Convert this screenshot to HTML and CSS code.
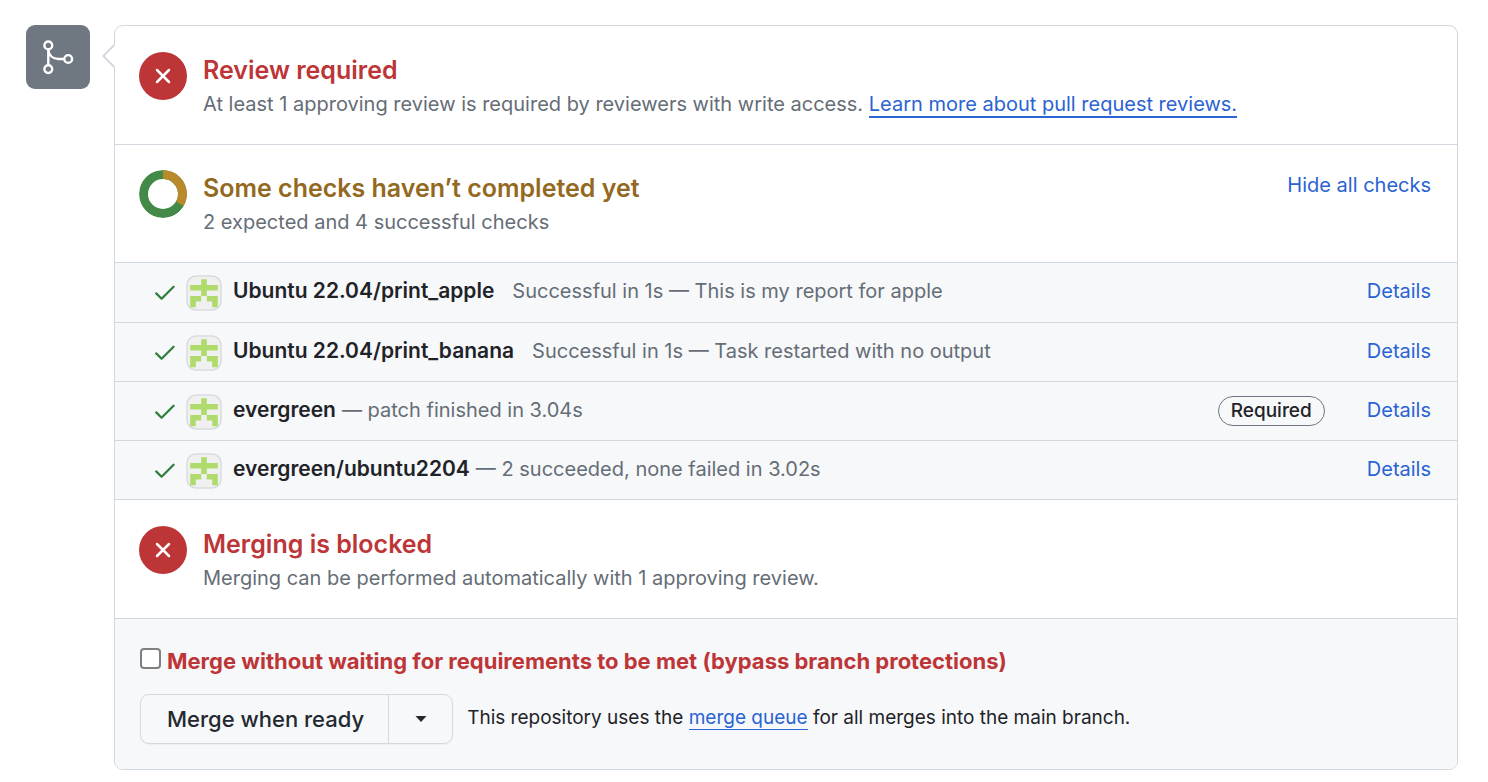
FILE: index.html
```html
<!DOCTYPE html>
<html lang="en">
<head>
<meta charset="utf-8">
<title>Merge status</title>
<link rel="stylesheet" href="styles.css">
</head>
<body>
<svg width="0" height="0" class="sprite" aria-hidden="true">
  <symbol id="cross" viewBox="0 0 48 48"><path d="M18 18l12 12M30 18l-12 12" fill="none" stroke="#fff" stroke-width="2.500" stroke-linecap="round"/></symbol>
  <symbol id="tick" viewBox="0 0 20 16"><path d="M1.200 8.400L6.600 13.700 18.600 1.700" fill="none" stroke="#2f7d3b" stroke-width="2.200" stroke-linecap="round" stroke-linejoin="round"/></symbol>
  <symbol id="avatar" viewBox="0 0 36 36">
    <rect x="1" y="1" width="34" height="34" rx="9" fill="#f0f0f0" stroke="#d9dbde" stroke-width="1.500"/>
    <path d="M15.200 4.300h5.600v5.600h11v5.600h-11v5.500h11v11.200h-5.600v-5.600h-5.400V21h-5.600v5.600H9.800v5.600H4.200V21h11v-5.500h-11V9.900h11z" fill="#aedb6c"/>
  </symbol>
</svg>
<main class="merge">
  <div class="badge">
    <svg viewBox="0 0 64 64" width="64" height="64" fill="none" stroke="#fff" stroke-width="2.400" aria-hidden="true">
      <circle cx="22.300" cy="20.400" r="3.900"/><circle cx="22.300" cy="44.100" r="3.900"/><circle cx="42.200" cy="34" r="3.900"/>
      <path d="M22.300 24.300v15.900M22.300 24.600c.6 5.700 4.500 9.400 10 9.400h6"/>
    </svg>
  </div>
  <div class="box">
    <svg class="caret" viewBox="0 0 13 24" width="13" height="24" aria-hidden="true"><path d="M13 0L1 12l12 12z" fill="#fff"/><path d="M12.500 .7L1.300 12l11.200 11.300" fill="none" stroke="#d0d7de" stroke-width="1.800"/></svg>
    <section class="status">
      <svg class="disc" aria-hidden="true"><use href="#cross"/></svg>
      <div class="body">
        <h2 class="title danger">Review required</h2>
        <p class="note">At least 1 approving review is required by reviewers with write access. <a class="underlined" href="#reviews">Learn more about pull request reviews.</a></p>
      </div>
    </section>
    <section class="status compact">
      <svg class="donut" viewBox="0 0 48 48" fill="none" stroke-width="9" aria-hidden="true">
        <circle cx="24" cy="24" r="19.500" stroke="#438a48"/>
        <path d="M24 4.500A19.500 19.500 0 0 1 40.890 33.750" stroke="#b88a2c"/>
      </svg>
      <div class="body">
        <h2 class="title attention">Some checks haven’t completed yet</h2>
        <p class="note">2 expected and 4 successful checks</p>
      </div>
      <button class="toggle" type="button">Hide all checks</button>
    </section>
    <ul class="checks">
      <li class="check"><svg class="tick" aria-hidden="true"><use href="#tick"/></svg><svg class="avatar" aria-hidden="true"><use href="#avatar"/></svg>
        <p class="text spaced"><strong>Ubuntu 22.04/print_apple</strong><span>Successful in 1s — This is my report for apple</span></p><a class="details" href="#apple">Details</a></li>
      <li class="check"><svg class="tick" aria-hidden="true"><use href="#tick"/></svg><svg class="avatar" aria-hidden="true"><use href="#avatar"/></svg>
        <p class="text spaced"><strong>Ubuntu 22.04/print_banana</strong><span>Successful in 1s — Task restarted with no output</span></p><a class="details" href="#banana">Details</a></li>
      <li class="check"><svg class="tick" aria-hidden="true"><use href="#tick"/></svg><svg class="avatar" aria-hidden="true"><use href="#avatar"/></svg>
        <p class="text"><strong>evergreen</strong><span>— patch finished in 3.04s</span></p><span class="required">Required</span><a class="details" href="#evergreen">Details</a></li>
      <li class="check"><svg class="tick" aria-hidden="true"><use href="#tick"/></svg><svg class="avatar" aria-hidden="true"><use href="#avatar"/></svg>
        <p class="text"><strong>evergreen/ubuntu2204</strong><span>— 2 succeeded, none failed in 3.02s</span></p><a class="details" href="#ubuntu2204">Details</a></li>
    </ul>
    <section class="status">
      <svg class="disc" aria-hidden="true"><use href="#cross"/></svg>
      <div class="body">
        <h2 class="title danger">Merging is blocked</h2>
        <p class="note">Merging can be performed automatically with 1 approving review.</p>
      </div>
    </section>
    <form class="actions">
      <div class="bypass">
        <input class="checkbox" type="checkbox" id="bypass">
        <label class="bypass-label" for="bypass">Merge without waiting for requirements to be met (bypass branch protections)</label>
      </div>
      <div class="merge-row">
        <div class="group">
          <button class="btn" type="button">Merge when ready</button>
          <button class="btn more" type="button" aria-label="Select merge method"><svg viewBox="0 0 12 6" width="12" height="6" aria-hidden="true"><path d="M.5 0h11L6 6z" fill="#24292f"/></svg></button>
        </div>
        <p class="queue">This repository uses the <a class="underlined thin" href="#queue">merge queue</a> for all merges into the main branch.</p>
      </div>
    </form>
  </div>
</main>
</body>
</html>
```
FILE: styles.css
```css
* { box-sizing: border-box; }
body { margin: 0; background: #fff; color: #1f2328; font-family: Inter, "Liberation Sans", sans-serif; font-size: 20px; line-height: 28px; }
h2, p, ul { margin: 0; padding: 0; }
a { color: #2a63d2; text-decoration: none; }
.sprite { position: absolute; }
.merge { display: flex; align-items: flex-start; gap: 24px; padding: 25px 30px 12px 26px; }
.badge { flex: none; width: 64px; height: 64px; border-radius: 9px; background: #6f7781; }
.badge svg { display: block; }
.box { position: relative; flex: 1; min-width: 0; border: 1px solid #d0d7de; border-radius: 9px; }
.caret { position: absolute; left: -13px; top: 18px; }
.status { display: flex; align-items: flex-start; gap: 16px; padding: 26px 26px 24px 24px; border-bottom: 1px solid #d0d7de; }
.compact { padding-top: 25px; }
.disc, .donut { flex: none; width: 48px; height: 48px; border-radius: 50%; }
.disc { background: #bd3537; }
.body { flex: 1; min-width: 0; }
.title { margin-bottom: 1px; font-size: 25px; line-height: 36px; font-weight: 600; }
.note { color: #656d76; line-height: 31px; }
.danger { color: #bd3537; }
.attention { color: #936922; }
.underlined { border-bottom: 2px solid #2a63d2; }
.thin { border-bottom-width: 1px; }
.toggle { border: 0; padding: 0; background: none; font: inherit; line-height: 30px; color: #2a63d2; }
.checks { list-style: none; background: #f6f8fa; }
.check { display: flex; align-items: center; padding: 12px 26px 10px 40px; border-bottom: 1px solid #d0d7de; }
.check:first-child { padding-bottom: 11px; }
.tick { width: 20px; height: 16px; margin-right: 11px; flex: none; }
.avatar { width: 36px; height: 36px; margin-right: 11px; flex: none; }
.text { flex: 1; min-width: 0; display: flex; align-items: baseline; gap: 6px; color: #656d76; padding-bottom: 4px; }
.text strong { color: #1f2328; font-size: 21px; font-weight: 600; }
.text.spaced { gap: 18px; }
.details { padding-bottom: 4px; }
.required { margin: 0 42px 2px 0; padding: 0 12px; border: 1px solid #6e7781; border-radius: 15px; font-size: 19px; font-weight: 500; }
.actions { padding: 26px 25px 25px; background: #f6f8fa; border-radius: 0 0 8px 8px; }
.bypass { display: flex; align-items: center; gap: 6px; margin-bottom: 17px; }
.checkbox { appearance: none; flex: none; width: 21px; height: 21px; margin: 0 0 5px; border: 2px solid #808080; border-radius: 4px; background: #fff; }
.bypass-label { color: #bd3537; font-size: 22px; line-height: 32px; font-weight: 700; }
.merge-row { display: flex; align-items: center; gap: 14px; }
.group { display: flex; border: 1px solid #d5d8dc; border-radius: 9px; box-shadow: 0 1px 1px #1f23280a; }
.btn { height: 48px; border: 0; padding: 0 24px 0 26px; background: none; color: #24292f; font: inherit; font-size: 22px; font-weight: 500; }
.more { display: flex; align-items: center; justify-content: center; width: 64px; padding: 0; border-left: 1px solid #d5d8dc; }
.queue { font-size: 19px; padding-bottom: 2px; }
```
